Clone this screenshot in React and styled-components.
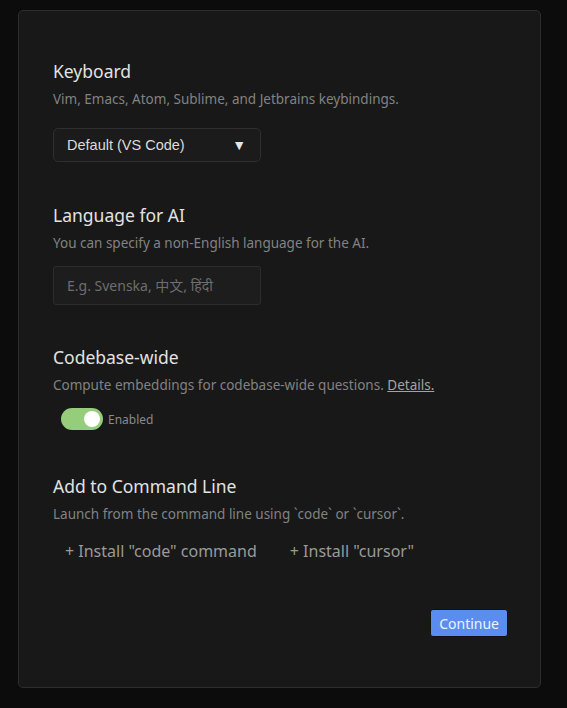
import styled, { createGlobalStyle } from "styled-components";
import { useState } from "react";

const Global = createGlobalStyle`
  html, body {
    margin: 0;
    padding: 0;
    background: #0c0c0c;
  }
  body {
    font-family: "Noto Sans", "Noto Sans CJK SC", sans-serif;
  }
`;

const Page = styled.div`
  padding: 10px 26px 20px 18px;
  min-height: 708px;
  box-sizing: border-box;
`;

const Card = styled.div`
  background: #181818;
  border: 1px solid #2e2e2e;
  border-radius: 5px;
  height: 678px;
  box-sizing: border-box;
  padding: 48px 32px 0 34px;
  display: flex;
  flex-direction: column;
`;

const Section = styled.div`
  display: flex;
  flex-direction: column;
  margin-bottom: ${(p) => p.gap ?? 40}px;
`;

const Title = styled.div`
  font-size: 17.5px;
  color: #e2e2e2;
  line-height: 24px;
`;

const Desc = styled.div`
  font-size: 13.5px;
  color: #828282;
  line-height: 18px;
  margin-top: 7px;
  white-space: nowrap;

  a {
    color: #a3a3a3;
    text-decoration: underline;
  }
`;

const Select = styled.div`
  margin-top: 20px;
  width: 208px;
  height: 34px;
  box-sizing: border-box;
  border: 1px solid #2f2f2f;
  border-radius: 5px;
  background: #1b1b1b;
  display: flex;
  align-items: center;
  justify-content: space-between;
  padding: 0 14px 0 13px;
  font-family: "Liberation Sans", Arial, sans-serif;
  font-size: 14.5px;
  color: #dcdcdc;
`;

const Arrow = styled.span`
  font-size: 14px;
  color: #e6e6e6;
`;

const Input = styled.input`
  margin-top: 14px;
  width: 208px;
  height: 39px;
  box-sizing: border-box;
  border: 1px solid #2c2c2c;
  border-radius: 3px;
  background: #1d1d1d;
  padding: 0 13px;
  font-family: "Noto Sans", "Noto Sans CJK SC", sans-serif;
  font-size: 14px;
  color: #ddd;
  outline: none;

  &::placeholder {
    color: #6e6e6e;
  }
`;

const ToggleRow = styled.label`
  margin-top: 14px;
  margin-left: 8px;
  display: flex;
  align-items: center;
  gap: 5px;
  font-size: 12px;
  color: #8a8a8a;
  cursor: pointer;
`;

const Track = styled.span`
  width: 42px;
  height: 22px;
  border-radius: 11px;
  background: ${(p) => (p.$on ? "#95cd7b" : "#444")};
  display: flex;
  align-items: center;
  justify-content: ${(p) => (p.$on ? "flex-end" : "flex-start")};
  padding: 0 3px;
  box-sizing: border-box;
`;

const Knob = styled.span`
  width: 16px;
  height: 16px;
  border-radius: 50%;
  background: #fff;
`;

const InstallRow = styled.div`
  margin-top: 18px;
  margin-left: 12px;
  display: flex;
  gap: 33px;
`;

const InstallButton = styled.button`
  background: none;
  border: none;
  padding: 0;
  font-family: "Noto Sans", sans-serif;
  font-size: 16px;
  line-height: 20px;
  color: #9a9a9a;
  cursor: pointer;
`;

const Footer = styled.div`
  display: flex;
  justify-content: flex-end;
`;

const Continue = styled.button`
  background: #5b8def;
  border: 1px solid #111;
  border-radius: 3px;
  color: #eef3ff;
  font-family: "Noto Sans", sans-serif;
  font-size: 14px;
  padding: 0 8px;
  height: 28px;
  cursor: pointer;
`;

export default function App() {
  const [enabled, setEnabled] = useState(true);

  return (
    <>
      <Global />
      <Page>
        <Card>
          <Section gap={41}>
            <Title>Keyboard</Title>
            <Desc>Vim, Emacs, Atom, Sublime, and Jetbrains keybindings.</Desc>
            <Select>
              <span>Default (VS Code)</span>
              <Arrow>▼</Arrow>
            </Select>
          </Section>

          <Section gap={40}>
            <Title>Language for AI</Title>
            <Desc>You can specify a non-English language for the AI.</Desc>
            <Input placeholder="E.g. Svenska, 中文, हिंदी" />
          </Section>

          <Section gap={44}>
            <Title>Codebase-wide</Title>
            <Desc>
              Compute embeddings for codebase-wide questions. <a>Details.</a>
            </Desc>
            <ToggleRow onClick={() => setEnabled(!enabled)}>
              <Track $on={enabled}>
                <Knob />
              </Track>
              Enabled
            </ToggleRow>
          </Section>

          <Section gap={48}>
            <Title>Add to Command Line</Title>
            <Desc>Launch from the command line using `code` or `cursor`.</Desc>
            <InstallRow>
              <InstallButton>+ Install "code" command</InstallButton>
              <InstallButton>+ Install "cursor"</InstallButton>
            </InstallRow>
          </Section>

          <Footer>
            <Continue>Continue</Continue>
          </Footer>
        </Card>
      </Page>
    </>
  );
}
